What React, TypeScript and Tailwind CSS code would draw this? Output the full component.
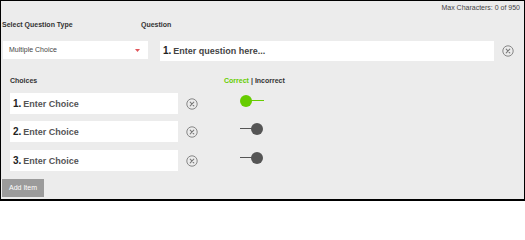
import React from 'react';

const CloseCircle: React.FC<{ className?: string }> = ({ className }) => (
  <svg className={className} viewBox="0 0 12 12" width="12" height="12">
    <circle cx="6" cy="6" r="5.2" fill="none" stroke="#7a7a7a" strokeWidth="0.9" />
    <path d="M4.2 4.2 L7.8 7.8 M7.8 4.2 L4.2 7.8" stroke="#7a7a7a" strokeWidth="1.1" strokeLinecap="round" />
  </svg>
);

const Toggle: React.FC<{ on: boolean }> = ({ on }) => (
  <div className="relative w-[24px] h-[12px] mb-[6px] shrink-0">
    <div
      className={
        on
          ? 'absolute top-[5.5px] left-[6px] w-[18px] h-[1px] bg-[#66cc00]'
          : 'absolute top-[5.5px] left-0 w-[18px] h-[1px] bg-[#555555]'
      }
    />
    <div
      className={
        on
          ? 'absolute top-0 left-0 w-[12px] h-[12px] rounded-full bg-[#66cc00]'
          : 'absolute top-0 left-[11px] w-[12px] h-[12px] rounded-full bg-[#555555]'
      }
    />
  </div>
);

const choices = [
  { n: 1, on: true },
  { n: 2, on: false },
  { n: 3, on: false },
];

export default function App() {
  return (
    <div
      className="w-[525px] h-[201px] border border-black border-b-2 bg-[#ececec] flex flex-col overflow-hidden"
      style={{ fontFamily: '"Liberation Sans", Arial, sans-serif' }}
    >
      <div className="flex justify-end pt-[3px] pr-[4px] text-[7px] leading-[8px] text-[#444]">
        Max Characters: 0 of 950
      </div>

      <div className="flex mt-[9px] text-[7px] leading-[8px] font-bold text-[#333]">
        <span className="w-[140px] pl-[1px]">Select Question Type</span>
        <span>Question</span>
      </div>

      <div className="flex items-start mt-[12px]">
        <div className="ml-[2px] w-[145px] h-[18px] bg-white flex items-center justify-between pl-[6px] pr-[8px]">
          <span className="text-[7px] text-[#444]">Multiple Choice</span>
          <svg width="5" height="3" viewBox="0 0 5 3">
            <path d="M0 0 L5 0 L2.5 3 Z" fill="#e0555a" />
          </svg>
        </div>
        <div className="ml-[12px] w-[334px] h-[20px] bg-white flex items-center pl-[3px] font-bold">
          <span className="flex items-baseline">
            <span className="text-[10px] text-[#222]">1.</span>
            <span className="text-[9px] text-[#444] ml-[2px]">Enter question here...</span>
          </span>
        </div>
        <CloseCircle className="ml-[8px] mt-[4px]" />
      </div>

      <div className="flex mt-[16px] pl-[9px] text-[7px] leading-[8px] font-bold">
        <span className="w-[214px] text-[#333]">Choices</span>
        <span className="text-[#66cc00]">Correct</span>
        <span className="text-[#333] mx-[2px]">|</span>
        <span className="text-[#333]">Incorrect</span>
      </div>

      <div className="flex flex-col mt-[8px]">
        {choices.map((c, i) => (
          <div key={c.n} className={i === 0 ? 'flex items-center pl-[9px]' : i === 1 ? 'flex items-center pl-[9px] mt-[7px]' : 'flex items-center pl-[9px] mt-[8px]'}>
            <div className="w-[168px] h-[21px] bg-white flex items-center pl-[3px] font-bold">
              <span className="flex items-baseline">
                <span className="text-[10px] text-[#222]">{c.n}.</span>
                <span className="text-[9px] text-[#555] ml-[2px]">Enter Choice</span>
              </span>
            </div>
            <CloseCircle className="ml-[8px]" />
            <div className="ml-[42px]">
              <Toggle on={c.on} />
            </div>
          </div>
        ))}
      </div>

      <div className="mt-[8px] ml-[1px] w-[42px] h-[18px] bg-[#9b9b9b] flex items-center justify-center text-[7px] text-white">
        Add Item
      </div>
    </div>
  );
}
